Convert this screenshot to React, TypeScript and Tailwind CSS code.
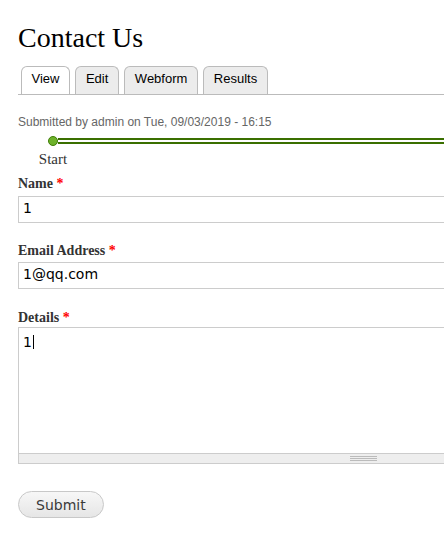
import React from "react";

const serif = { fontFamily: '"Liberation Serif", "Times New Roman", serif' };
const sans = { fontFamily: '"Liberation Sans", Arial, sans-serif' };
const dejavu = { fontFamily: '"DejaVu Sans", Verdana, sans-serif' };

function Tab({ label, active }: { label: string; active?: boolean }) {
  return (
    <div
      className={`h-[28px] px-[9.5px] pt-[4px] border border-b-0 border-[#bbbbbb] rounded-t-[6px] text-[13px] leading-[15px] text-black ${
        active ? "bg-white" : "bg-[#ececec]"
      }`}
      style={sans}
    >
      {label}
    </div>
  );
}

function Label({ text }: { text: string }) {
  return (
    <div className="h-[16px] text-[14px] leading-[16px] font-bold text-[#333333]" style={serif}>
      {text} <span className="text-[#ff0000]">*</span>
    </div>
  );
}

function Input({ value }: { value: string }) {
  return (
    <div
      className="h-[27px] w-[691px] border border-[#cccccc] bg-white pl-[4px] pt-[3px] text-[14px] leading-[16px] text-black"
      style={dejavu}
    >
      {value}
    </div>
  );
}

export default function App() {
  return (
    <div className="w-[444px] h-[555px] overflow-hidden bg-white">
      <div className="w-[760px] pl-[18px]">
        <h1 className="mt-[22px] h-[32px] text-[28px] leading-[32px] font-normal text-black" style={serif}>
          Contact Us
        </h1>

        <div className="mt-[12px] flex gap-[5.5px] pl-[3px] border-b border-[#bbbbbb]">
          <Tab label="View" active />
          <Tab label="Edit" />
          <Tab label="Webform" />
          <Tab label="Results" />
        </div>

        <div className="mt-[20px] h-[14px] text-[12px] leading-[14px] text-[#666666]" style={sans}>
          Submitted by admin on Tue, 09/03/2019 - 16:15
        </div>

        <div className="mt-[7px] h-[10px] flex items-center">
          <div className="w-[30px] shrink-0" />
          <div className="w-[10px] h-[10px] shrink-0 rounded-full bg-[#6db22a] border border-[#3f7d08]" />
          <div className="flex-1 h-[6px] border-y-2 border-[#3a6f00] bg-white" />
        </div>

        <div className="mt-[5px] w-[70px] h-[16px] text-center text-[15px] leading-[16px] text-[#333333]" style={serif}>
          Start
        </div>

        <div className="mt-[9px]">
          <Label text="Name" />
        </div>
        <div className="mt-[4px]">
          <Input value="1" />
        </div>

        <div className="mt-[20px]">
          <Label text="Email Address" />
        </div>
        <div className="mt-[3px]">
          <Input value="1@qq.com" />
        </div>

        <div className="mt-[21px]">
          <Label text="Details" />
        </div>
        <div className="mt-[1px] h-[137px] w-[691px] border border-[#cccccc] bg-white flex flex-col">
          <div className="flex-1 pl-[4px] pt-[6px] text-[14px] leading-[16px] text-black" style={dejavu}>
            <span>1</span>
            <span className="inline-block w-[1px] h-[14px] bg-black align-[-2px] ml-[1px]" />
          </div>
          <div className="h-[10px] border-t border-[#cccccc] bg-[#eeeeee] flex justify-center pt-[2px]">
            <div className="w-[27px] flex flex-col gap-[1px]">
              <div className="h-[1px] bg-[#bbbbbb]" />
              <div className="h-[1px] bg-[#bbbbbb]" />
              <div className="h-[1px] bg-[#bbbbbb]" />
            </div>
          </div>
        </div>

        <div className="mt-[27px]">
          <button
            className="h-[27px] px-[17px] rounded-full border border-[#c8c8c8] bg-linear-to-b from-[#f7f7f7] to-[#e6e6e6] text-[14px] leading-[16px] text-[#3a3a3a]"
            style={dejavu}
          >
            Submit
          </button>
        </div>
      </div>
    </div>
  );
}
